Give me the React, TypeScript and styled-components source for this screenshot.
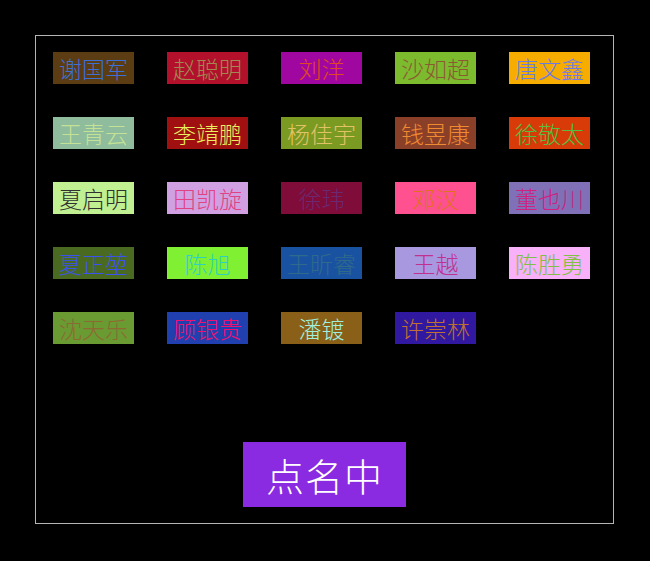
import React from "react";
import styled, { createGlobalStyle } from "styled-components";

const GlobalStyle = createGlobalStyle`
  html, body {
    margin: 0;
    padding: 0;
    background: #000;
  }
  body {
    font-family: "Noto Sans CJK SC", "Noto Sans", sans-serif;
  }
`;

const Page = styled.div`
  width: 650px;
  height: 561px;
  padding: 35px 0 0 35px;
  box-sizing: border-box;
  background: #000;
`;

const Board = styled.div`
  width: 579px;
  height: 489px;
  box-sizing: border-box;
  border: 1px solid #b4b4b4;
  padding: 16px 0 16px 17px;
  display: flex;
  flex-direction: column;
`;

const Grid = styled.div`
  display: grid;
  grid-template-columns: repeat(5, 81px);
  grid-auto-rows: 32px;
  column-gap: 33px;
  row-gap: 33px;
`;

const Tag = styled.div<{ $bg: string; $fg: string }>`
  display: flex;
  align-items: center;
  justify-content: center;
  background: ${(p) => p.$bg};
  color: ${(p) => p.$fg};
  font-family: "Noto Sans CJK SC", sans-serif;
  font-weight: 300;
  font-size: 23px;
  line-height: 1;
  white-space: nowrap;
`;

const Footer = styled.div`
  margin-top: auto;
  display: flex;
  justify-content: center;
  padding-right: 17px;
`;

const CallButton = styled.button`
  width: 163px;
  height: 65px;
  border: none;
  padding: 0;
  background: #8a2be2;
  color: #fff;
  font-family: "Noto Sans CJK SC", sans-serif;
  font-weight: 300;
  font-size: 38px;
  line-height: 1;
  letter-spacing: 1px;
  cursor: pointer;
`;

const people: { name: string; bg: string; fg: string }[] = [
  { name: "谢国军", bg: "#5c3c12", fg: "#3a70d8" },
  { name: "赵聪明", bg: "#b3102c", fg: "#a08a52" },
  { name: "刘洋", bg: "#a006a0", fg: "#e04a22" },
  { name: "沙如超", bg: "#7cba2e", fg: "#8c5a32" },
  { name: "唐文鑫", bg: "#f7ad00", fg: "#6a7ae8" },
  { name: "王青云", bg: "#8fbc9c", fg: "#c4e296" },
  { name: "李靖鹏", bg: "#a01010", fg: "#e8f060" },
  { name: "杨佳宇", bg: "#7a9a22", fg: "#e2c266" },
  { name: "钱昱康", bg: "#8a4028", fg: "#f08a32" },
  { name: "徐敬太", bg: "#d83a08", fg: "#52c042" },
  { name: "夏启明", bg: "#c0f092", fg: "#303030" },
  { name: "田凯旋", bg: "#d0a0e2", fg: "#e04282" },
  { name: "徐玮", bg: "#800c3a", fg: "#6a2a70" },
  { name: "邓汉", bg: "#ff5090", fg: "#e07020" },
  { name: "董也川", bg: "#8070b8", fg: "#d02080" },
  { name: "夏正堃", bg: "#4a6a22", fg: "#3a52f0" },
  { name: "陈旭", bg: "#80f032", fg: "#30d0c0" },
  { name: "王昕睿", bg: "#1a52a2", fg: "#306a8a" },
  { name: "王越", bg: "#a898e0", fg: "#c03090" },
  { name: "陈胜勇", bg: "#f8b0f8", fg: "#80c042" },
  { name: "沈天乐", bg: "#6a9a32", fg: "#8c6a32" },
  { name: "顾银贵", bg: "#2040b0", fg: "#f01070" },
  { name: "潘镀", bg: "#8a6018", fg: "#a0f0e0" },
  { name: "许崇林", bg: "#3018a0", fg: "#c07032" },
];

export default function App() {
  return (
    <>
      <GlobalStyle />
      <Page>
        <Board>
          <Grid>
            {people.map((p) => (
              <Tag key={p.name} $bg={p.bg} $fg={p.fg}>
                {p.name}
              </Tag>
            ))}
          </Grid>
          <Footer>
            <CallButton>点名中</CallButton>
          </Footer>
        </Board>
      </Page>
    </>
  );
}
